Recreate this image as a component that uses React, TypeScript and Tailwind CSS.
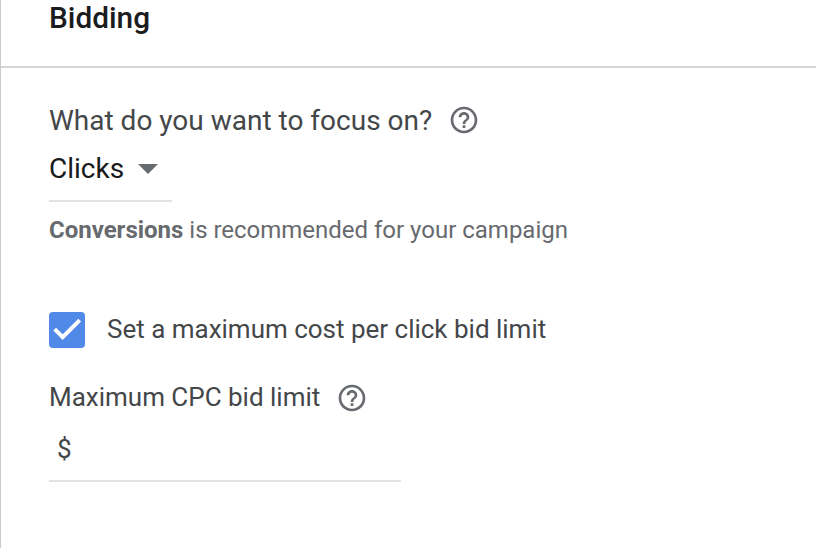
import React, { useState } from 'react';

const HelpIcon = () => (
  <svg className="h-8 w-8 shrink-0 fill-[#676a6e]" viewBox="0 0 24 24">
    <path d="M11 18h2v-2h-2v2zm1-16C6.48 2 2 6.48 2 12s4.48 10 10 10 10-4.48 10-10S17.52 2 12 2zm0 18c-4.41 0-8-3.59-8-8s3.59-8 8-8 8 3.59 8 8-3.59 8-8 8zm0-14c-2.21 0-4 1.79-4 4h2c0-1.1.9-2 2-2s2 .9 2 2c0 2-3 1.75-3 5h2c0-2.25 3-2.5 3-5 0-2.21-1.79-4-4-4z" />
  </svg>
);

export default function App() {
  const [limited, setLimited] = useState(true);

  return (
    <div className="h-[548px] w-[816px] overflow-hidden border-l border-[#cccccc] bg-white font-[Roboto,sans-serif] text-[#44474a]">
      <header className="h-[68px] border-b-2 border-[#d6d6d6] pl-12">
        <h1 className="text-[29.8px] leading-9 font-medium text-[#1b1c1d]">Bidding</h1>
      </header>

      <main className="flex flex-col items-start pt-9 pl-12">
        <div className="flex h-8 items-center gap-4">
          <span className="pt-0.5 text-[28px] leading-8 whitespace-nowrap">What do you want to focus on?</span>
          <HelpIcon />
        </div>

        <button className="flex h-[66px] w-[123px] items-center gap-3.5 border-b-2 border-[#e2e2e2] pt-0.5 text-[28px] text-[#18191a]">
          Clicks
          <svg className="h-2.5 w-5 fill-[#676a6e]" viewBox="0 0 20 10">
            <path d="M0 0h20L10 10z" />
          </svg>
        </button>

        <p className="mt-3 text-[24px] leading-8 tracking-[-0.01px] whitespace-nowrap text-[#676a6e]">
          <b>Conversions</b> is recommended for your campaign
        </p>

        <label className="mt-[66px] flex h-9 items-center gap-[22px] text-[26px] tracking-[-0.01px] whitespace-nowrap">
          <input
            type="checkbox"
            className="sr-only"
            checked={limited}
            onChange={(e) => setLimited(e.target.checked)}
          />
          <span className="h-9 w-9 rounded-[4px] bg-[#5189e8]">
            {limited && (
              <svg className="h-9 w-9 fill-none stroke-white stroke-[4]" viewBox="0 0 36 36">
                <path d="M5.7 17.2l8 8L30.7 8.2" />
              </svg>
            )}
          </span>
          <span className="pb-0.5">Set a maximum cost per click bid limit</span>
        </label>

        <div className="mt-[34px] flex h-8 items-center gap-4">
          <span className="pb-0.5 text-[26px] leading-8 tracking-[-0.01px] whitespace-nowrap">Maximum CPC bid limit</span>
          <HelpIcon />
        </div>
        <div className="flex h-[68px] w-[352px] items-center border-b-2 border-[#e2e2e2] pt-1 pl-2 text-[26px]">$</div>
      </main>
    </div>
  );
}
